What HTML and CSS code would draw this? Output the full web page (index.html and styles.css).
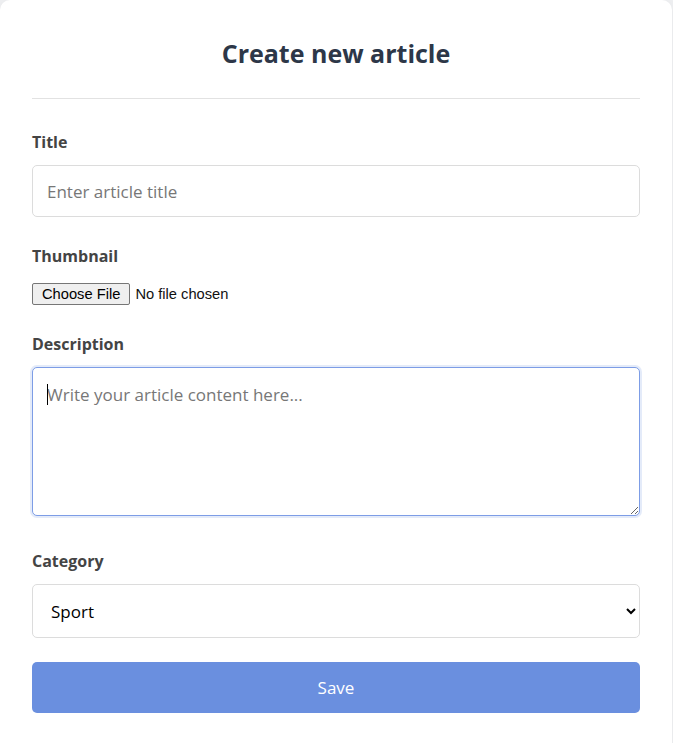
FILE: index.html
```html
<!DOCTYPE html>
<html lang="en">
<head>
<meta charset="utf-8">
<title>Create new article</title>
<link rel="stylesheet" href="styles.css">
</head>
<body>
<div class="card">
  <h1 class="card-title">Create new article</h1>
  <hr class="divider">
  <form class="article-form">
    <div class="field">
      <label class="field-label" for="title">Title</label>
      <input class="text-input" id="title" type="text" placeholder="Enter article title">
    </div>
    <div class="field field-file">
      <label class="field-label" for="thumb">Thumbnail</label>
      <input class="file-input" id="thumb" type="file">
    </div>
    <div class="field field-area">
      <label class="field-label" for="desc">Description</label>
      <div class="area-wrap">
        <textarea class="text-area is-focused" id="desc" placeholder="Write your article content here..."></textarea>
        <span class="caret"></span>
      </div>
    </div>
    <div class="field field-select">
      <label class="field-label" for="cat">Category</label>
      <select class="select-input" id="cat">
        <option>Sport</option>
        <option>Politics</option>
        <option>Technology</option>
      </select>
    </div>
    <button class="save-btn" type="button">Save</button>
  </form>
</div>
</body>
</html>
```
FILE: styles.css
```css
* { box-sizing: border-box; }
html, body { margin: 0; padding: 0; }
body {
  background: #eeeff1;
  font-family: "Open Sans", "Noto Sans", sans-serif;
  line-height: 1.5;
  color: #333;
}
.card {
  max-width: 672px;
  background: #fff;
  border-radius: 10px;
  padding: 34px 32px 40px;
  box-shadow: 0 2px 10px rgba(0,0,0,0.04);
}
.card-title {
  margin: 0;
  font-size: 25px;
  line-height: 38px;
  font-weight: 700;
  text-align: center;
  color: #2d3748;
}
.divider {
  margin: 26px 0 31px;
  border: 0;
  border-top: 1px solid #e2e2e2;
  height: 0;
}
.article-form { display: flex; flex-direction: column; }
.field { margin-bottom: 27px; }
.field-label {
  display: block;
  margin-bottom: 11px;
  font-size: 16px;
  line-height: 24px;
  font-weight: 700;
  color: #444;
}
.text-input, .text-area, .select-input {
  display: block;
  width: 100%;
  font-family: "Open Sans", "Noto Sans", sans-serif;
  font-size: 17px;
  line-height: 1.5;
  border: 1px solid #dcdcdc;
  border-radius: 5px;
  background: #fff;
  color: #111;
  outline: none;
}
.text-input { height: 52px; padding: 0 14px; }
.text-input::placeholder, .text-area::placeholder { color: #777; opacity: 1; }
.field-file { margin-bottom: 27px; }
.file-input {
  display: block;
  margin-top: 15px;
  height: 22px;
  font-family: "Liberation Sans", Arial, sans-serif;
  font-size: 14.7px;
  line-height: 20px;
  color: #111;
}
.file-input::file-selector-button {
  margin: 0 5px 0 0;
  height: 22px;
  padding: 0 9px;
  border: 1px solid #767676;
  border-radius: 2px;
  background: #efefef;
  color: #000;
  font-family: "Liberation Sans", Arial, sans-serif;
  font-size: 14.7px;
}
.field-area { margin-bottom: 33px; }
.area-wrap { position: relative; }
.text-area {
  height: 149px;
  padding: 14px 14px;
  resize: vertical;
}
.text-area.is-focused {
  border-color: #7d9de6;
  box-shadow: 0 0 0 2px rgba(106,143,223,0.18);
}
.caret {
  position: absolute;
  left: 15px;
  top: 17px;
  width: 1px;
  height: 21px;
  background: #000;
}
.field-select { margin-bottom: 24px; }
.select-input {
  height: 54px;
  padding: 0 12px 0 14px;
  color: #000;
}
.save-btn {
  display: block;
  height: 51px;
  width: 100%;
  border: 0;
  border-radius: 5px;
  background: #6a8fdf;
  color: #fff;
  font-family: "Open Sans", "Noto Sans", sans-serif;
  font-size: 17px;
  cursor: pointer;
}
```
